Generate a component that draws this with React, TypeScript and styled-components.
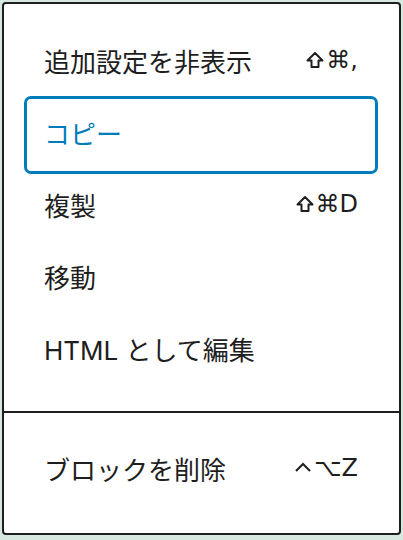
import React from "react";
import styled, { createGlobalStyle } from "styled-components";

const Global = createGlobalStyle`
  html, body {
    margin: 0;
    padding: 0;
    background: #d7e8e0;
  }
  body {
    padding: 2px;
    font-family: "Inter", "Noto Sans CJK JP", "DejaVu Sans", sans-serif;
  }
`;

const Panel = styled.div`
  width: 399px;
  height: 533px;
  box-sizing: border-box;
  border: 2px solid #1e1e1e;
  border-radius: 4px;
  background: #fff;
  display: flex;
  flex-direction: column;
`;

const Group = styled.div<{ $top: number; $bottom: number; $divided?: boolean }>`
  display: flex;
  flex-direction: column;
  padding: ${(p) => p.$top}px 24px ${(p) => p.$bottom}px 23px;
  border-top: ${(p) => (p.$divided ? "2px solid #1e1e1e" : "none")};
`;

const Item = styled.div<{ $focused?: boolean }>`
  height: 72px;
  box-sizing: border-box;
  display: flex;
  align-items: center;
  justify-content: space-between;
  padding: 0 17px 6px 17px;
  border-radius: 4px;
  font-size: 26px;
  color: ${(p) => (p.$focused ? "#007cba" : "#1e1e1e")};
  box-shadow: ${(p) => (p.$focused ? "0 0 0 3px #007cba" : "none")};
`;

const Label = styled.span`
  white-space: nowrap;
`;

const Shortcut = styled.span`
  display: inline-flex;
  align-items: center;
  gap: 2px;
  font-family: "DejaVu Sans", "Inter", sans-serif;
  font-size: 24px;
  color: #1e1e1e;
  white-space: nowrap;
`;

const KeyIcon = styled.svg`
  width: 18px;
  height: 18px;
  flex: none;
`;

const ShiftIcon = () => (
  <KeyIcon viewBox="0 0 18 18">
    <path
      d="M9 2 L16.5 9.5 H12.5 V16 H5.5 V9.5 H1.5 Z"
      fill="none"
      stroke="#1e1e1e"
      strokeWidth="2"
      strokeLinejoin="round"
    />
  </KeyIcon>
);

const CtrlIcon = () => (
  <KeyIcon viewBox="0 0 18 18">
    <path
      d="M2 12 L9 5 L16 12"
      fill="none"
      stroke="#1e1e1e"
      strokeWidth="2"
    />
  </KeyIcon>
);

export default function App() {
  return (
    <>
      <Global />
      <Panel>
        <Group $top={23} $bottom={24}>
          <Item>
            <Label>追加設定を非表示</Label>
            <Shortcut>
              <ShiftIcon />
              ⌘,
            </Shortcut>
          </Item>
          <Item $focused>
            <Label>コピー</Label>
          </Item>
          <Item>
            <Label>複製</Label>
            <Shortcut>
              <ShiftIcon />
              ⌘D
            </Shortcut>
          </Item>
          <Item>
            <Label>移動</Label>
          </Item>
          <Item>
            <Label>HTML として編集</Label>
          </Item>
        </Group>
        <Group $top={22} $bottom={26} $divided>
          <Item>
            <Label>ブロックを削除</Label>
            <Shortcut>
              <CtrlIcon />
              ⌥Z
            </Shortcut>
          </Item>
        </Group>
      </Panel>
    </>
  );
}
